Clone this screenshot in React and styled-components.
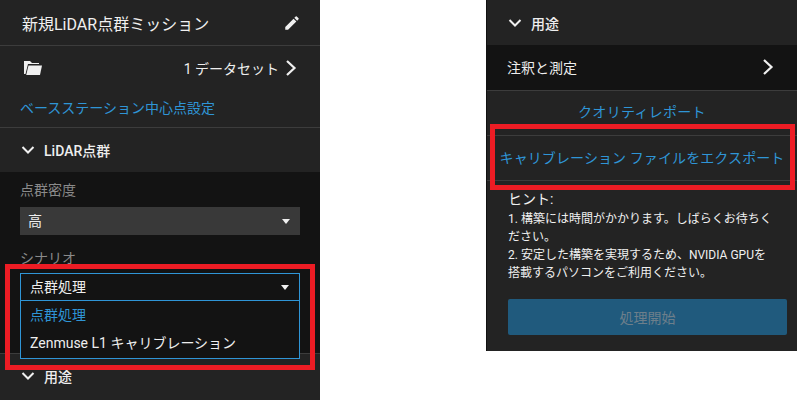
import React from "react";
import styled, { createGlobalStyle } from "styled-components";

const Global = createGlobalStyle`
  html, body { margin: 0; padding: 0; background: #fff; }
  body { font-family: Roboto, "Noto Sans CJK JP", sans-serif; }
  * { box-sizing: border-box; }
`;
const Page = styled.div`
  position: relative;
  width: 797px;
  height: 400px;
  overflow: hidden;
  display: flex;
  justify-content: space-between;
  align-items: flex-start;
  background: #fff;
`;
const Panel = styled.div`
  width: ${p => p.$w}px;
  height: ${p => p.$h}px;
  background: #232323;
  color: #eee;
  display: flex;
  flex-direction: column;
  font-size: 14px;
`;
const Row = styled.div`
  height: ${p => p.$h || 45}px;
  flex: none;
  display: flex;
  align-items: center;
  justify-content: ${p => p.$center ? "center" : "space-between"};
  padding: ${p => p.$pad || "0 20px"};
  background: ${p => p.$dark ? "#131313" : "transparent"};
  border-bottom: ${p => p.$line ? "1px solid #3c3c3c" : "none"};
  gap: 8px;
  white-space: nowrap;
`;
const Title = styled.span`
  font-size: 16px;
  color: #f0f0f0;
`;
const Link = styled.span`
  color: #2f95d6;
  font-size: 14px;
  letter-spacing: ${p => p.$ls || 0}px;
`;
const Right = styled.span`
  display: flex;
  align-items: center;
  gap: 6px;
  font-size: 14px;
`;
const Header = styled.div`
  height: ${p => p.$h || 44}px;
  flex: none;
  display: flex;
  align-items: center;
  gap: 9px;
  padding: 0 21px;
  font-size: 14px;
  font-weight: 500;
  color: #eee;
`;
const Body = styled.div`
  height: 182px;
  flex: none;
  background: #131313;
  padding: 10px 20px 0;
  border-bottom: 1px solid #3c3c3c;
  display: flex;
  flex-direction: column;
`;
const Label = styled.div`
  font-size: 14px;
  line-height: 16px;
  color: #8a8a8a;
  height: ${p => p.$h}px;
  padding-top: ${p => p.$top || 0}px;
  flex: none;
`;
const Select = styled.div`
  height: 28px;
  flex: none;
  display: flex;
  align-items: center;
  justify-content: space-between;
  padding: 0 10px 0 ${p => p.$open ? 9 : 8}px;
  background: ${p => p.$open ? "#131313" : "#393939"};
  border: ${p => p.$open ? "1px solid #2f95d6" : "none"};
  font-size: 14px;
  color: #eee;
`;
const SelectText = styled.span`
  padding-bottom: ${p => p.$lift}px;
`;
const Caret = styled.i`
  width: 0;
  height: 0;
  border-left: 4px solid transparent;
  border-right: 4px solid transparent;
  border-top: 5px solid #f0f0f0;
`;
const Menu = styled.div`
  position: relative;
  z-index: 1;
  height: 58px;
  flex: none;
  background: #131313;
  border: 1px solid #2f95d6;
  border-top: none;
  display: flex;
  flex-direction: column;
  font-size: 14px;
`;
const MenuItem = styled.div`
  height: 28px;
  display: flex;
  align-items: center;
  padding: 0 0 2px 9px;
  color: ${p => p.$active ? "#2f95d6" : "#eee"};
`;
const Hints = styled.div`
  padding: 9px 0 0 21px;
  width: 287px;
  font-size: 12px;
  line-height: 18px;
  color: #f0f0f0;
`;
const HintTitle = styled.div`
  font-size: 14px;
  margin-bottom: 2px;
`;
const StartButton = styled.div`
  margin: 17px 10px 0 21px;
  height: 36px;
  flex: none;
  background: #205a7d;
  border-radius: 2px;
  color: #6d7f8b;
  font-size: 14px;
  display: flex;
  align-items: center;
  justify-content: center;
`;
const Mark = styled.div`
  position: absolute;
  left: ${p => p.$x}px;
  top: ${p => p.$y}px;
  width: ${p => p.$w}px;
  height: ${p => p.$h}px;
  border: 5px solid #ed1c24;
  z-index: 2;
  pointer-events: none;
`;
const RightPanel = styled(Panel)`
  border-left: 1px solid #111;
`;

const ChevronRight = () => (
  <svg width="12" height="16" viewBox="0 0 12 16" fill="none" stroke="#f0f0f0" strokeWidth="2.2">
    <path d="M2 1 L9.5 8 L2 15" />
  </svg>
);
const ChevronDown = () => (
  <svg width="14" height="14" viewBox="0 0 14 14" fill="none" stroke="#f0f0f0" strokeWidth="2">
    <path d="M1.5 4 L7 9.5 L12.5 4" />
  </svg>
);
const Pencil = () => (
  <svg width="18" height="18" viewBox="0 0 24 24" fill="#f0f0f0" style={{ marginRight: -1 }}>
    <path d="M3 17.25V21h3.75L17.81 9.94l-3.75-3.75L3 17.25zM20.71 7.04a1 1 0 0 0 0-1.41l-2.34-2.34a1 1 0 0 0-1.41 0l-1.83 1.83 3.75 3.75 1.83-1.83z" />
  </svg>
);
const Folder = () => (
  <svg width="20" height="16" viewBox="0 0 20 16" fill="#f0f0f0" style={{ marginLeft: 3 }}>
    <path d="M1 1h6l2 2h7v1H5L2.5 14H1z" />
    <path d="M5.5 5.5H19l-2 9.5H3.2z" />
  </svg>
);

export default function App() {
  return (
    <Page>
      <Global />
      <Panel $w={320} $h={400}>
        <Row $line $h={46} $pad="0 20px 0 22px">
          <Title>新規LiDAR点群ミッション</Title>
          <Pencil />
        </Row>
        <Row $h={44} $pad="0 23px 0 20px">
          <Folder />
          <Right>1 データセット <ChevronRight /></Right>
        </Row>
        <Row $line $h={38} $pad="0 20px 3px">
          <Link>ベースステーション中心点設定</Link>
        </Row>
        <Header><ChevronDown />LiDAR点群</Header>
        <Body>
          <Label $h={25}>点群密度</Label>
          <Select><SelectText $lift={3}>高</SelectText><Caret /></Select>
          <Label $h={38} $top={15}>シナリオ</Label>
          <Select $open><SelectText $lift={2}>点群処理</SelectText><Caret /></Select>
          <Menu>
            <MenuItem $active>点群処理</MenuItem>
            <MenuItem>Zenmuse L1 キャリブレーション</MenuItem>
          </Menu>
        </Body>
        <Header><ChevronDown />用途</Header>
      </Panel>
      <Mark $x={5} $y={264} $w={310} $h={106} />
      <RightPanel $w={311} $h={351}>
        <Header $h={45}><ChevronDown />用途</Header>
        <Row $dark $line $h={46} $pad="0 23px 2px 20px">
          <span>注釈と測定</span>
          <ChevronRight />
        </Row>
        <Row $center $line $h={45} $pad="0 0 4px">
          <Link $ls={0.3}>クオリティレポート</Link>
        </Row>
        <Row $center $line $h={45} $pad="0 0 2px">
          <Link $ls={0.1}>キャリブレーション ファイルをエクスポート</Link>
        </Row>
        <Hints>
          <HintTitle>ヒント:</HintTitle>
          1. 構築には時間がかかります。しばらくお待ちください。<br />
          2. 安定した構築を実現するため、NVIDIA GPUを搭載するパソコンをご利用ください。
        </Hints>
        <StartButton>処理開始</StartButton>
      </RightPanel>
      <Mark $x={490} $y={124} $w={305} $h={66} />
    </Page>
  );
}
